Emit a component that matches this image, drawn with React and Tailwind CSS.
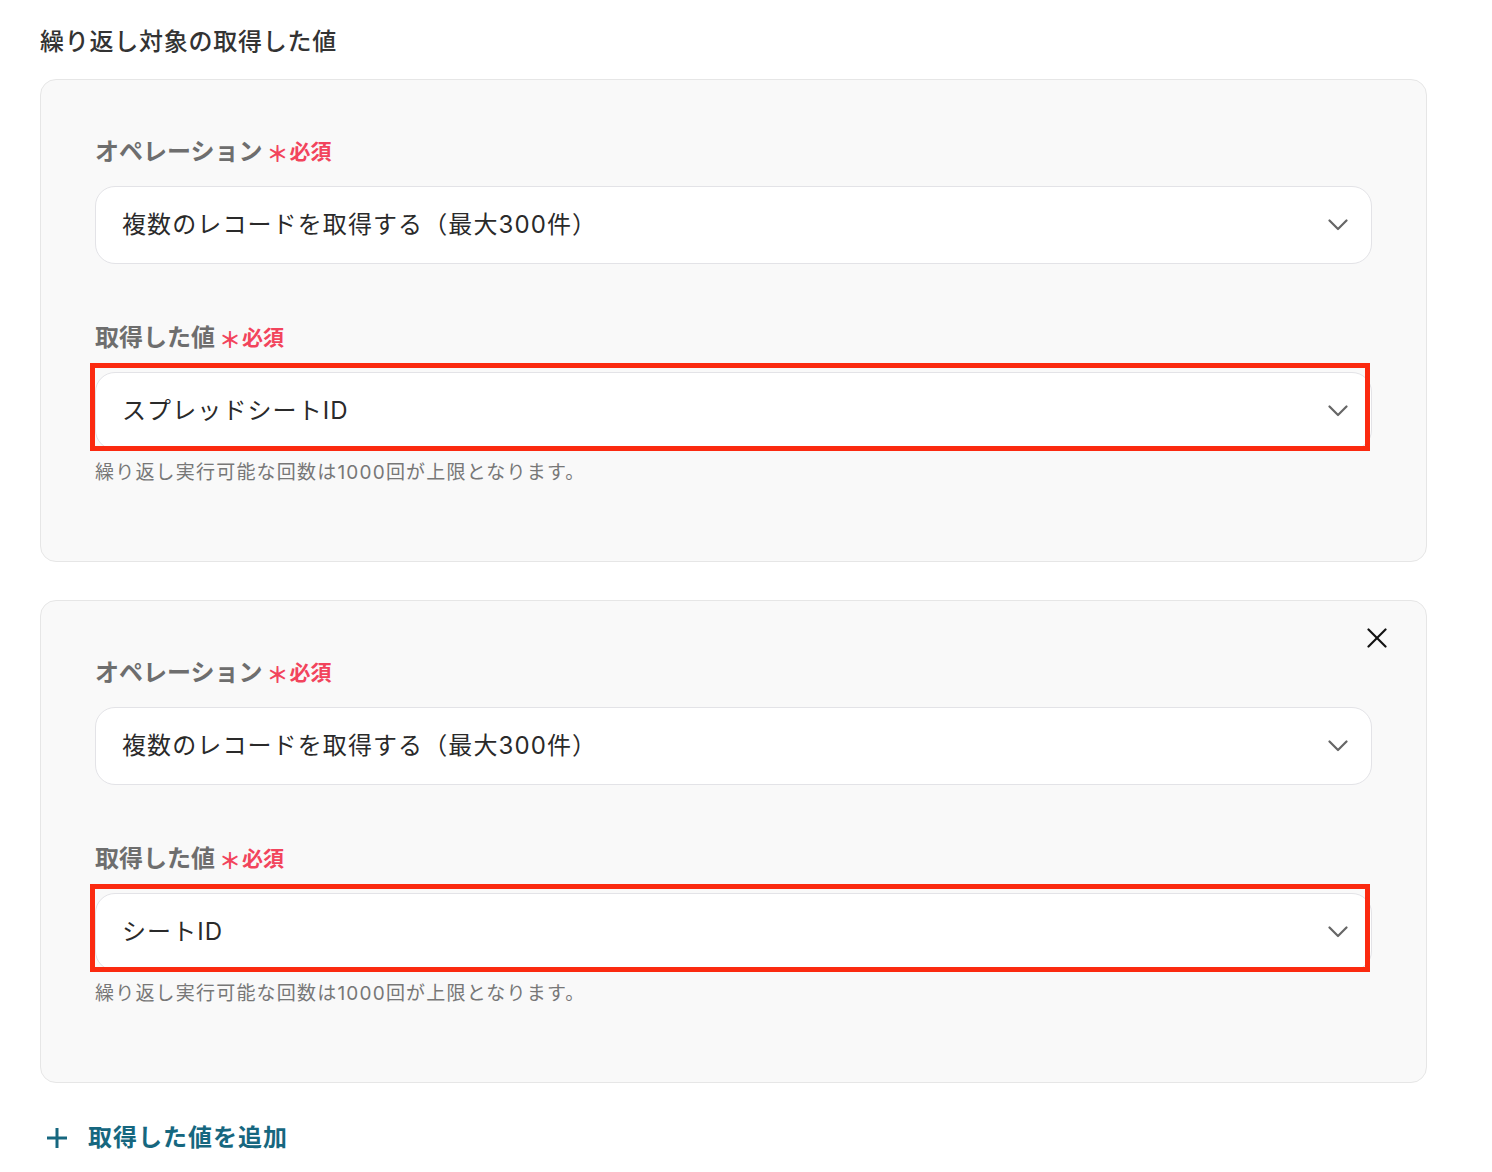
import React from "react";

const FONT = { fontFamily: 'Inter, "Noto Sans CJK JP", "Noto Sans", sans-serif' };

function Chevron() {
  return (
    <svg width="20" height="12" viewBox="0 0 20 12" fill="none">
      <polyline points="1.5,1.5 10,10 18.5,1.5" stroke="#666666" strokeWidth="2.2" strokeLinecap="round" strokeLinejoin="round" />
    </svg>
  );
}

function CloseIcon() {
  return (
    <svg width="20" height="20" viewBox="0 0 20 20" fill="none">
      <line x1="1.5" y1="1.5" x2="18.5" y2="18.5" stroke="#111111" strokeWidth="2.2" strokeLinecap="round" />
      <line x1="18.5" y1="1.5" x2="1.5" y2="18.5" stroke="#111111" strokeWidth="2.2" strokeLinecap="round" />
    </svg>
  );
}

function PlusIcon() {
  return (
    <svg width="22" height="22" viewBox="0 0 22 22" fill="none">
      <line x1="11" y1="1" x2="11" y2="21" stroke="#16677f" strokeWidth="3" />
      <line x1="1" y1="11" x2="21" y2="11" stroke="#16677f" strokeWidth="3" />
    </svg>
  );
}

function Label({ children }) {
  return (
    <div className="flex items-center h-[36px]">
      <span className="text-[24px] leading-[36px] font-semibold text-[#6e6e6e]">{children}</span>
      <span className="ml-[4px] text-[22px] leading-[36px] font-bold text-[#f2445c] translate-y-[2px]">＊</span>
      <span className="ml-[1px] text-[21px] leading-[36px] font-bold text-[#f2445c]">必須</span>
    </div>
  );
}

function Select({ value, highlighted }) {
  return (
    <div className="relative">
      <div className="flex items-center justify-between h-[78px] rounded-[20px] border border-[#e3e3e7] bg-white pl-[26px] pr-[23px]">
        <span className="text-[24px] leading-[36px] tracking-[1.1px] text-[#2a2a2a]">{value}</span>
        <Chevron />
      </div>
      {highlighted && (
        <div className="absolute left-[-5px] top-[-9px] right-[2px] bottom-[-1px] border-[5px] border-[#fb2a10] pointer-events-none" />
      )}
    </div>
  );
}

function Card({ closable, value }) {
  return (
    <div
      className={
        "w-[1387px] rounded-[16px] border border-[#e6e6e6] bg-[#f9f9f9] px-[54px] pb-[74px] " +
        (closable ? "pt-[27px]" : "pt-[54px]")
      }
    >
      {closable && (
        <div className="flex justify-end -mr-[15px] mb-[7px]">
          <CloseIcon />
        </div>
      )}
      <Label>オペレーション</Label>
      <div className="mt-[16px]">
        <Select value="複数のレコードを取得する（最大300件）" />
      </div>
      <div className="mt-[56px]">
        <Label>取得した値</Label>
      </div>
      <div className="mt-[16px]">
        <Select value={value} highlighted />
      </div>
      <p className="mt-[9px] text-[19px] leading-[28px] tracking-[1.2px] text-[#777777]">
        繰り返し実行可能な回数は1000回が上限となります。
      </p>
    </div>
  );
}

export default function App() {
  return (
    <div className="min-h-[1172px] bg-white pt-[24px] pl-[40px]" style={FONT}>
      <h2 className="text-[24px] leading-[36px] tracking-[0.75px] font-medium text-[#333333]">繰り返し対象の取得した値</h2>
      <div className="mt-[19px]">
        <Card value="スプレッドシートID" />
      </div>
      <div className="mt-[38px]">
        <Card closable value="シートID" />
      </div>
      <button className="mt-[37px] flex items-center gap-[20px] pl-[6px] h-[36px]">
        <PlusIcon />
        <span className="text-[24px] leading-[36px] tracking-[1px] font-bold text-[#16677f]">取得した値を追加</span>
      </button>
    </div>
  );
}
